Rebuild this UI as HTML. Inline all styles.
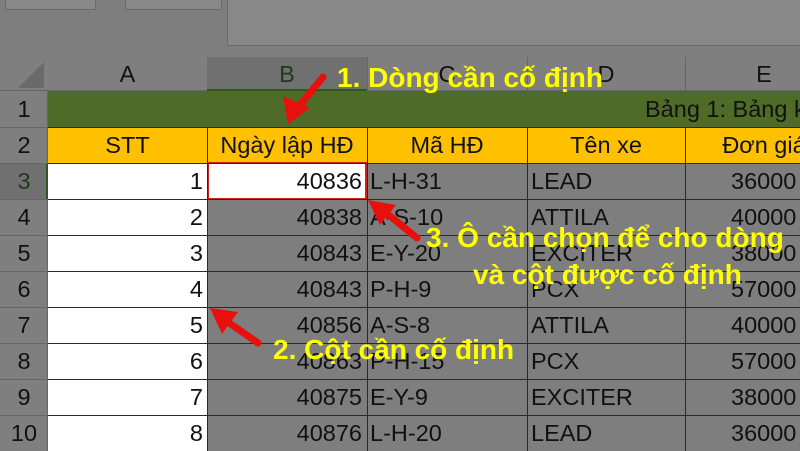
<!DOCTYPE html>
<html><head><meta charset="utf-8"><style>
*{margin:0;padding:0;box-sizing:border-box}
body{width:800px;height:450px;overflow:hidden;background:#7e7e7e;position:relative;font-family:"Liberation Sans",sans-serif}
.a{position:absolute}
.c{position:absolute;font-size:23.5px;color:#111;line-height:36px;white-space:nowrap;overflow:hidden}
.hl{position:absolute;background:#2a2a2a;height:1px}
.vl{position:absolute;background:#2a2a2a;width:1px}
.y{position:absolute;color:#ffff00;font-weight:bold;font-size:28px;white-space:nowrap}
</style></head><body>
<div class="a" style="left:5px;top:0;width:91px;height:10px;background:#888;border:1px solid #6a6a6a;border-top:none"></div>
<div class="a" style="left:125px;top:0;width:97px;height:10px;background:#888;border:1px solid #6a6a6a;border-top:none"></div>
<div class="a" style="left:227px;top:0;width:580px;height:46px;background:#888;border:1px solid #6a6a6a;border-top:none"></div>
<div class="a" style="left:0;top:57px;width:800px;height:34px;background:#7f7f7f;border-bottom:1px solid #666"></div>
<div class="a" style="left:18px;top:62px;width:0;height:0;border-left:26px solid transparent;border-bottom:26px solid #6a6a6a"></div>
<div class="a" style="left:207px;top:57px;width:160px;height:34px;background:#707070;border-bottom:2px solid #2e5a20"></div>
<div class="c" style="left:48px;top:56px;width:159px;text-align:center;color:#111">A</div>
<div class="c" style="left:207px;top:56px;width:160px;text-align:center;color:#1e3a1a">B</div>
<div class="c" style="left:367px;top:56px;width:160px;text-align:center">C</div>
<div class="c" style="left:527px;top:56px;width:158px;text-align:center">D</div>
<div class="c" style="left:685px;top:56px;width:158px;text-align:center">E</div>
<div class="vl" style="left:367px;top:57px;height:34px;background:#666"></div>
<div class="vl" style="left:527px;top:57px;height:34px;background:#666"></div>
<div class="vl" style="left:685px;top:57px;height:34px;background:#666"></div>
<div class="a" style="left:0;top:91px;width:48px;height:360px;background:#7f7f7f;border-right:1px solid #666"></div>
<div class="a" style="left:0;top:163px;width:48px;height:36px;background:#707070;border-right:2px solid #2e5a20"></div>
<div class="a" style="left:48px;top:91px;width:752px;height:36px;background:#4f6b28"></div>
<div class="c" style="left:645px;top:91px;color:#111">Bảng 1: Bảng k</div>
<div class="a" style="left:48px;top:127px;width:752px;height:36px;background:#ffc000"></div>
<div class="c" style="left:48px;top:127px;width:159px;text-align:center">STT</div>
<div class="c" style="left:207px;top:127px;width:160px;text-align:center">Ngày lập HĐ</div>
<div class="c" style="left:367px;top:127px;width:160px;text-align:center">Mã HĐ</div>
<div class="c" style="left:527px;top:127px;width:158px;text-align:center">Tên xe</div>
<div class="c" style="left:685px;top:127px;width:158px;text-align:center">Đơn giá</div>
<div class="a" style="left:48px;top:163px;width:159px;height:288px;background:#fff"></div>
<div class="a" style="left:207px;top:163px;width:160px;height:36px;background:#fff"></div>
<div class="a" style="left:207px;top:162px;width:160px;height:38px;border:2px solid #d0201c"></div>
<div class="hl" style="left:48px;top:127px;width:752px"></div>
<div class="hl" style="left:48px;top:163px;width:752px"></div>
<div class="hl" style="left:48px;top:199px;width:752px"></div>
<div class="hl" style="left:48px;top:235px;width:752px"></div>
<div class="hl" style="left:48px;top:271px;width:752px"></div>
<div class="hl" style="left:48px;top:307px;width:752px"></div>
<div class="hl" style="left:48px;top:343px;width:752px"></div>
<div class="hl" style="left:48px;top:379px;width:752px"></div>
<div class="hl" style="left:48px;top:415px;width:752px"></div>
<div class="vl" style="left:207px;top:127px;height:324px"></div>
<div class="vl" style="left:367px;top:127px;height:324px"></div>
<div class="vl" style="left:527px;top:127px;height:324px"></div>
<div class="vl" style="left:685px;top:127px;height:324px"></div>
<div class="hl" style="left:0;top:127px;width:48px;background:#666"></div>
<div class="hl" style="left:0;top:163px;width:48px;background:#666"></div>
<div class="hl" style="left:0;top:199px;width:48px;background:#666"></div>
<div class="hl" style="left:0;top:235px;width:48px;background:#666"></div>
<div class="hl" style="left:0;top:271px;width:48px;background:#666"></div>
<div class="hl" style="left:0;top:307px;width:48px;background:#666"></div>
<div class="hl" style="left:0;top:343px;width:48px;background:#666"></div>
<div class="hl" style="left:0;top:379px;width:48px;background:#666"></div>
<div class="hl" style="left:0;top:415px;width:48px;background:#666"></div>
<div class="c" style="left:0;top:91px;width:48px;text-align:center">1</div>
<div class="c" style="left:0;top:127px;width:48px;text-align:center">2</div>
<div class="c" style="left:0;top:163px;width:48px;text-align:center;color:#1e3a1a">3</div>
<div class="c" style="left:0;top:199px;width:48px;text-align:center">4</div>
<div class="c" style="left:0;top:235px;width:48px;text-align:center">5</div>
<div class="c" style="left:0;top:271px;width:48px;text-align:center">6</div>
<div class="c" style="left:0;top:307px;width:48px;text-align:center">7</div>
<div class="c" style="left:0;top:343px;width:48px;text-align:center">8</div>
<div class="c" style="left:0;top:379px;width:48px;text-align:center">9</div>
<div class="c" style="left:0;top:415px;width:48px;text-align:center">10</div>
<div class="c" style="left:48px;top:163px;width:155px;text-align:right">1</div>
<div class="c" style="left:48px;top:199px;width:155px;text-align:right">2</div>
<div class="c" style="left:48px;top:235px;width:155px;text-align:right">3</div>
<div class="c" style="left:48px;top:271px;width:155px;text-align:right">4</div>
<div class="c" style="left:48px;top:307px;width:155px;text-align:right">5</div>
<div class="c" style="left:48px;top:343px;width:155px;text-align:right">6</div>
<div class="c" style="left:48px;top:379px;width:155px;text-align:right">7</div>
<div class="c" style="left:48px;top:415px;width:155px;text-align:right">8</div>
<div class="c" style="left:207px;top:163px;width:155px;text-align:right">40836</div>
<div class="c" style="left:207px;top:199px;width:155px;text-align:right">40838</div>
<div class="c" style="left:207px;top:235px;width:155px;text-align:right">40843</div>
<div class="c" style="left:207px;top:271px;width:155px;text-align:right">40843</div>
<div class="c" style="left:207px;top:307px;width:155px;text-align:right">40856</div>
<div class="c" style="left:207px;top:343px;width:155px;text-align:right">40863</div>
<div class="c" style="left:207px;top:379px;width:155px;text-align:right">40875</div>
<div class="c" style="left:207px;top:415px;width:155px;text-align:right">40876</div>
<div class="c" style="left:370px;top:163px">L-H-31</div>
<div class="c" style="left:370px;top:199px">A-S-10</div>
<div class="c" style="left:370px;top:235px">E-Y-20</div>
<div class="c" style="left:370px;top:271px">P-H-9</div>
<div class="c" style="left:370px;top:307px">A-S-8</div>
<div class="c" style="left:370px;top:343px">P-H-15</div>
<div class="c" style="left:370px;top:379px">E-Y-9</div>
<div class="c" style="left:370px;top:415px">L-H-20</div>
<div class="c" style="left:531px;top:163px">LEAD</div>
<div class="c" style="left:531px;top:199px">ATTILA</div>
<div class="c" style="left:531px;top:235px">EXCITER</div>
<div class="c" style="left:531px;top:271px">PCX</div>
<div class="c" style="left:531px;top:307px">ATTILA</div>
<div class="c" style="left:531px;top:343px">PCX</div>
<div class="c" style="left:531px;top:379px">EXCITER</div>
<div class="c" style="left:531px;top:415px">LEAD</div>
<div class="c" style="left:731px;top:163px">36000</div>
<div class="c" style="left:731px;top:199px">40000</div>
<div class="c" style="left:731px;top:235px">38000</div>
<div class="c" style="left:731px;top:271px">57000</div>
<div class="c" style="left:731px;top:307px">40000</div>
<div class="c" style="left:731px;top:343px">57000</div>
<div class="c" style="left:731px;top:379px">38000</div>
<div class="c" style="left:731px;top:415px">36000</div>
<svg class="a" style="left:0;top:0" width="800" height="450">
<g stroke="#e8100c" stroke-width="7" stroke-linecap="round" fill="#e8100c">
<line x1="323" y1="77" x2="300" y2="105"/>
<line x1="417" y1="238" x2="385" y2="212"/>
<line x1="258" y1="343" x2="225" y2="320"/>
</g>
<g fill="#e8100c">
<polygon points="288,124 283,96 310,108"/>
<polygon points="368,200 396,205 380,225"/>
<polygon points="210,308 238,312 222,334"/>
</g>
</svg>
<div class="y" style="left:337px;top:62px">1. Dòng cần cố định</div>
<div class="y" style="left:426px;top:222px">3. Ô cần chọn để cho dòng</div>
<div class="y" style="left:473px;top:259px">và cột được cố định</div>
<div class="y" style="left:273px;top:334px">2. Cột cần cố định</div>
</body></html>
